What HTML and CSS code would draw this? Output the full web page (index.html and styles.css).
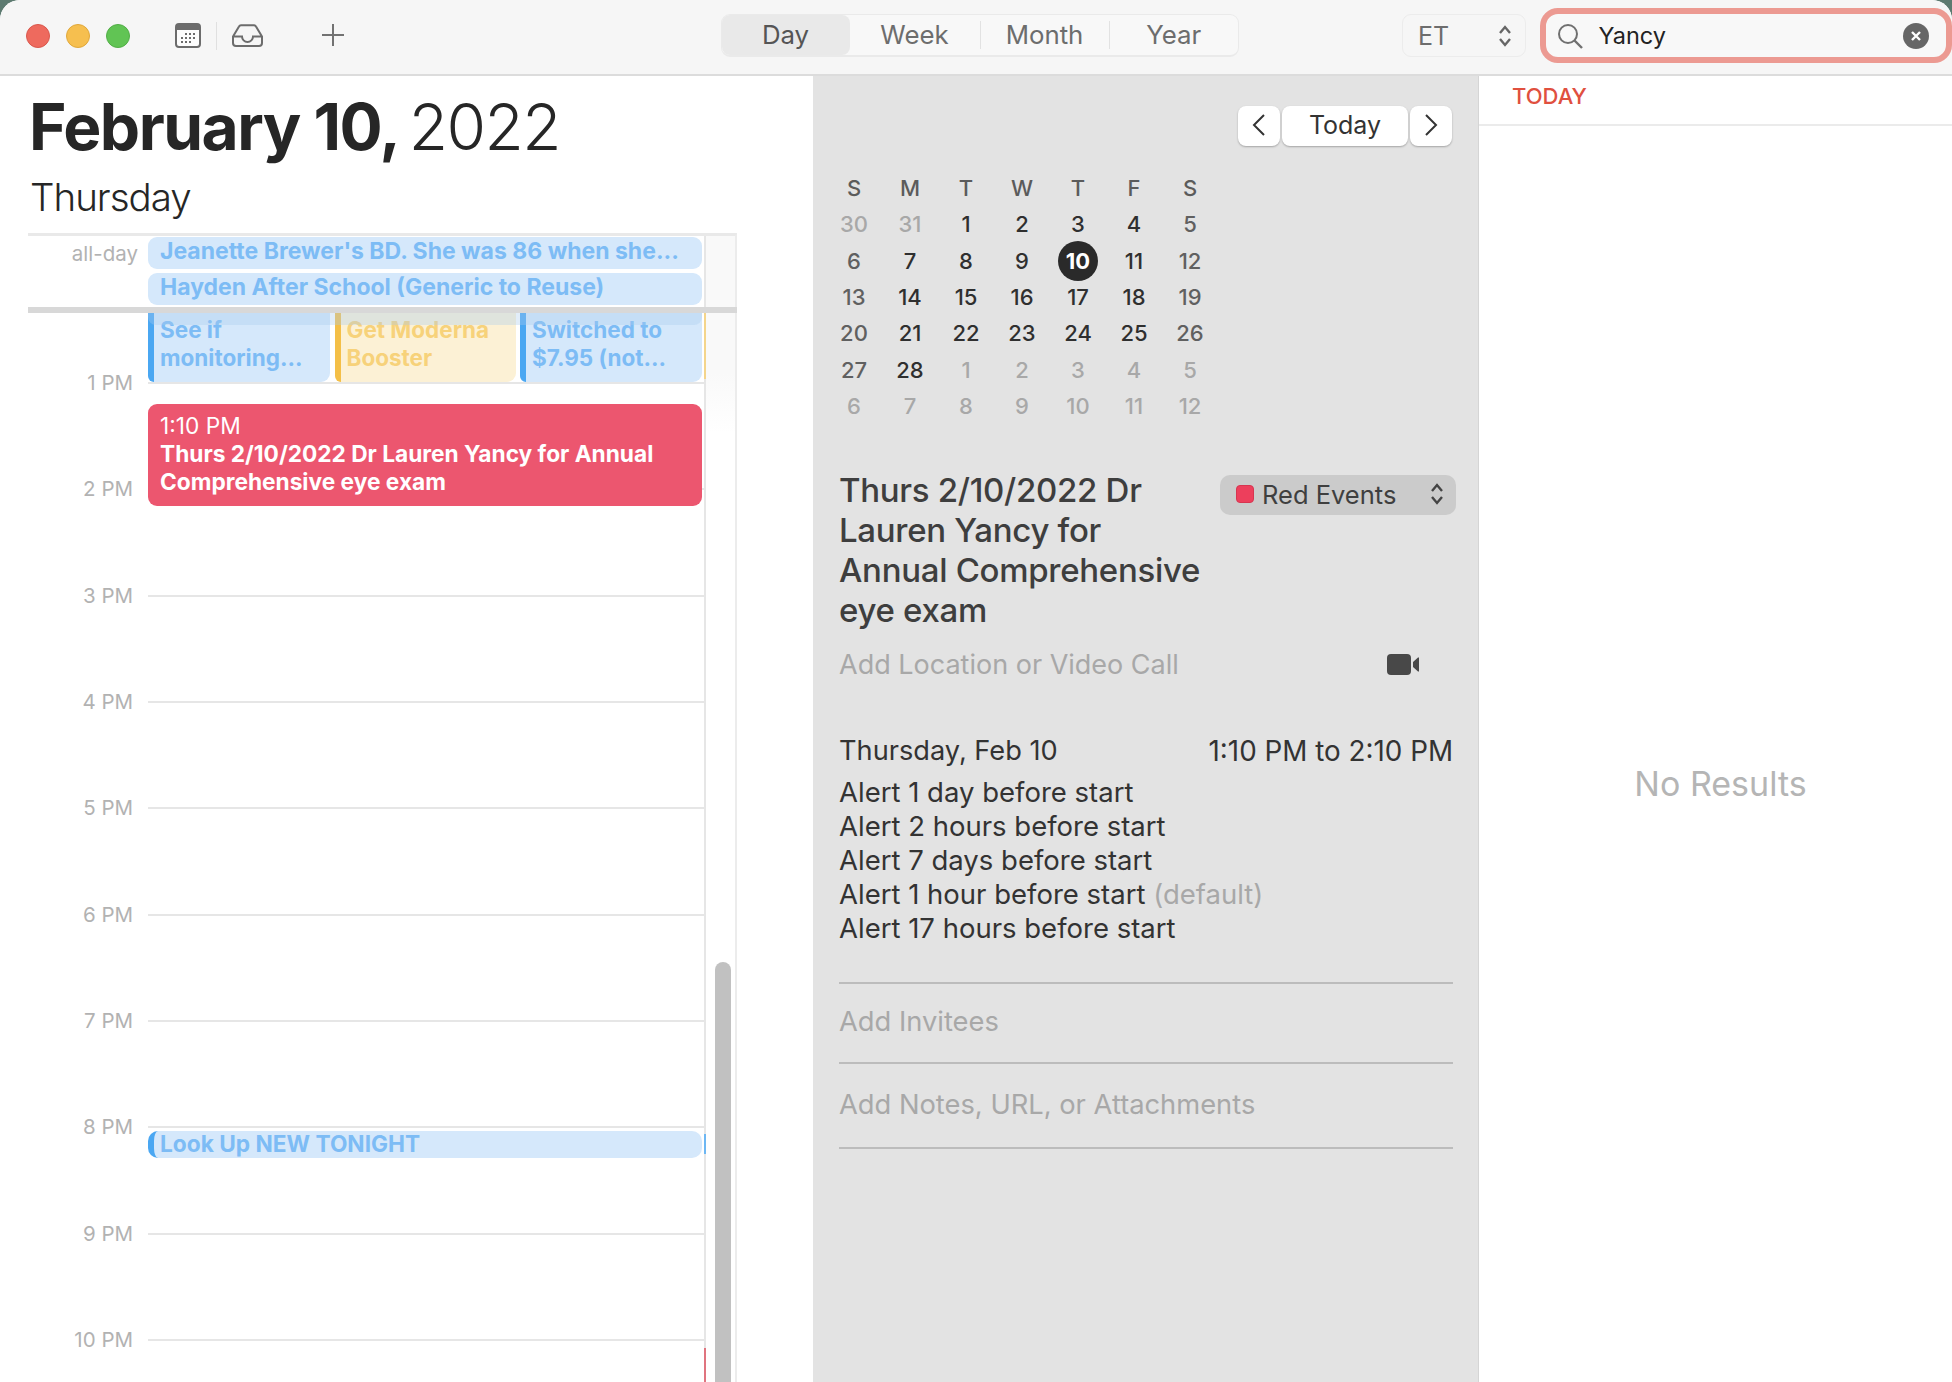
FILE: index.html
```html
<!DOCTYPE html>
<html lang="en">
<head>
<meta charset="utf-8">
<title>Calendar</title>
<link rel="stylesheet" href="styles.css">
</head>
<body>
<div class="window">
  <header class="toolbar">
    <div class="lights">
      <span class="light red"></span><span class="light yellow"></span><span class="light green"></span>
    </div>
    <svg class="tool-cal" width="26" height="25" viewBox="0 0 26 25"><rect x="1" y="1" width="24" height="23" rx="3" fill="#fdfdfd" stroke="#6c6c6c" stroke-width="2"/><path d="M1 7V4a3 3 0 0 1 3-3h18a3 3 0 0 1 3 3v3z" fill="#6c6c6c"/><g fill="#6c6c6c"><rect x="10" y="10" width="2" height="2"/><rect x="14" y="10" width="2" height="2"/><rect x="18" y="10" width="2" height="2"/><rect x="6" y="14" width="2" height="2"/><rect x="10" y="14" width="2" height="2"/><rect x="14" y="14" width="2" height="2"/><rect x="18" y="14" width="2" height="2"/><rect x="6" y="18" width="2" height="2"/><rect x="10" y="18" width="2" height="2"/><rect x="14" y="18" width="2" height="2"/></g></svg>
    <span class="tool-sep"></span>
    <svg class="tool-inbox" width="31" height="23" viewBox="0 0 31 23"><path d="M1 12.5 7 2.5a2.5 2.5 0 0 1 2-1.300h13a2.500 2.500 0 0 1 2 1.300l6 10v6.500a3 3 0 0 1-3 3H4a3 3 0 0 1-3-3z M1 12.500h9a5.500 5.500 0 0 0 11 0h9" fill="none" stroke="#6c6c6c" stroke-width="2"/></svg>
    <svg class="tool-plus" width="22" height="22" viewBox="0 0 22 22"><path d="M11 0v22M0 11h22" stroke="#727272" stroke-width="2"/></svg>
    <nav class="segments">
      <span class="seg seg-on">Day</span>
      <span class="seg">Week</span>
      <span class="seg seg-line">Month</span>
      <span class="seg">Year</span>
    </nav>
    <div class="tz">
      <span>ET</span>
      <svg class="updown" width="14" height="22" viewBox="0 0 14 22"><path d="M2 8l5-6 5 6M2 14l5 6 5-6" fill="none" stroke="#666" stroke-width="2.400"/></svg>
    </div>
    <div class="search">
      <svg width="26" height="26" viewBox="0 0 26 26"><circle cx="11" cy="11" r="9" fill="none" stroke="#707070" stroke-width="2"/><path d="M17.500 17.500 25 25" stroke="#707070" stroke-width="2.400"/></svg>
      <span class="search-text">Yancy</span>
      <svg class="search-clear" width="26" height="26" viewBox="0 0 26 26"><circle cx="13" cy="13" r="13" fill="#666"/><path d="M9 9l8 8M17 9l-8 8" stroke="#fff" stroke-width="2.400"/></svg>
    </div>
  </header>

  <div class="main">
    <section class="day">
      <h1 class="date"><strong>February 10,</strong> <span>2022</span></h1>
      <h2 class="weekday">Thursday</h2>
      <div class="frame">
        <div class="allday">
          <span class="allday-label">all-day</span>
          <div class="allday-events">
            <div class="pill">Jeanette Brewer's BD. She was 86 when she...</div>
            <div class="pill">Hayden After School (Generic to Reuse)</div>
          </div>
        </div>
        <div class="divider"></div>
        <div class="timeline">
          <div class="hours">
            <div class="hour-head"></div>
            <div class="hour"><span class="hour-label">1 PM</span><i class="hour-line"></i></div>
            <div class="hour"><span class="hour-label">2 PM</span><i class="hour-line"></i></div>
            <div class="hour"><span class="hour-label">3 PM</span><i class="hour-line"></i></div>
            <div class="hour"><span class="hour-label">4 PM</span><i class="hour-line"></i></div>
            <div class="hour"><span class="hour-label">5 PM</span><i class="hour-line"></i></div>
            <div class="hour"><span class="hour-label">6 PM</span><i class="hour-line"></i></div>
            <div class="hour"><span class="hour-label">7 PM</span><i class="hour-line"></i></div>
            <div class="hour"><span class="hour-label">8 PM</span><i class="hour-line"></i></div>
            <div class="hour"><span class="hour-label">9 PM</span><i class="hour-line"></i></div>
            <div class="hour"><span class="hour-label">10 PM</span><i class="hour-line"></i></div>

            <div class="morning">
              <div class="ev ev-blue">See if monitoring...</div>
              <div class="ev ev-yellow">Get Moderna Booster</div>
              <div class="ev ev-blue">Switched to $7.95 (not...</div>
            </div>
            <div class="band"></div>
            <span class="sliver-yellow"></span>
            <div class="red-event">
              <div class="red-time">1:10 PM</div>
              <div class="red-title">Thurs 2/10/2022 Dr Lauren Yancy for Annual Comprehensive eye exam</div>
            </div>
            <div class="lookup">Look Up NEW TONIGHT</div>
            <span class="sliver-blue"></span>
            <span class="sliver-red"></span>
          </div>
          <div class="gutter"><div class="thumb"></div></div>
        </div>
      </div>
    </section>

    <section class="mid">
      <div class="nav">
        <button class="nav-btn nav-arrow"><svg width="14" height="24" viewBox="0 0 14 24"><path d="M12 2 2 12l10 10" fill="none" stroke="#333" stroke-width="2"/></svg></button>
        <button class="nav-btn nav-today">Today</button>
        <button class="nav-btn nav-arrow"><svg width="14" height="24" viewBox="0 0 14 24"><path d="M2 2l10 10L2 22" fill="none" stroke="#333" stroke-width="2"/></svg></button>
      </div>
      <div class="mini">
        <span class="dow">S</span><span class="dow">M</span><span class="dow">T</span><span class="dow">W</span><span class="dow">T</span><span class="dow">F</span><span class="dow">S</span>
        <span class="off">30</span><span class="off">31</span><span>1</span><span>2</span><span>3</span><span>4</span><span class="wkend">5</span>
        <span class="wkend">6</span><span>7</span><span>8</span><span>9</span><span class="today">10</span><span>11</span><span class="wkend">12</span>
        <span class="wkend">13</span><span>14</span><span>15</span><span>16</span><span>17</span><span>18</span><span class="wkend">19</span>
        <span class="wkend">20</span><span>21</span><span>22</span><span>23</span><span>24</span><span>25</span><span class="wkend">26</span>
        <span class="wkend">27</span><span>28</span><span class="off">1</span><span class="off">2</span><span class="off">3</span><span class="off">4</span><span class="off">5</span>
        <span class="off">6</span><span class="off">7</span><span class="off">8</span><span class="off">9</span><span class="off">10</span><span class="off">11</span><span class="off">12</span>
      </div>
      <div class="detail-head">
        <h3 class="detail-title">Thurs 2/10/2022 Dr Lauren Yancy for Annual Comprehensive eye exam</h3>
        <div class="picker">
          <i class="picker-dot"></i><span class="picker-name">Red Events</span>
          <svg class="updown" width="14" height="22" viewBox="0 0 14 22"><path d="M2 8l5-6 5 6M2 14l5 6 5-6" fill="none" stroke="#444" stroke-width="2.400"/></svg>
        </div>
      </div>
      <div class="location">
        <span>Add Location or Video Call</span>
        <svg width="32" height="21" viewBox="0 0 32 21"><rect width="24" height="21" rx="4" fill="#484848"/><path d="M26 8l5-4.500a.6.6 0 0 1 1 .4v13.200a.6.6 0 0 1-1 .4l-5-4.500z" fill="#484848"/></svg>
      </div>
      <div class="when"><span>Thursday, Feb 10</span><span class="when-time">1:10 PM to 2:10 PM</span></div>
      <ul class="alerts">
        <li>Alert 1 day before start</li>
        <li>Alert 2 hours before start</li>
        <li>Alert 7 days before start</li>
        <li>Alert 1 hour before start <span class="muted">(default)</span></li>
        <li>Alert 17 hours before start</li>
      </ul>
      <div class="field field-inv">Add Invitees</div>
      <div class="field field-notes">Add Notes, URL, or Attachments</div>
    </section>

    <aside class="results">
      <div class="results-head">TODAY</div>
      <div class="no-results">No Results</div>
    </aside>
  </div>
</div>
</body>
</html>
```
FILE: styles.css
```css
* { box-sizing: border-box; }
html, body { margin: 0; padding: 0; height: 100%; }
body { background: #5d7a70; font-family: Inter, "Liberation Sans", sans-serif; color: #2a2a2a; overflow: hidden; }
.window { width: 1952px; height: 1382px; display: flex; flex-direction: column; background: #fff; border-radius: 20px 20px 0 0; overflow: hidden; }

.toolbar { flex: none; height: 76px; background: #f6f6f6; border-bottom: 2px solid #dcdcdc; display: flex; align-items: center; padding-left: 26px; padding-bottom: 3px; }
.lights { display: flex; gap: 16px; }
.light { width: 24px; height: 24px; border-radius: 50%; }
.red { background: #ee6a5e; border: 1px solid #d9584d; }
.yellow { background: #f6bf4f; border: 1px solid #e0a83b; }
.green { background: #61c454; border: 1px solid #52ae47; }
.tool-cal { margin-left: 45px; }
.tool-sep { width: 1px; height: 28px; background: #e0e0e0; margin-left: 15px; }
.tool-inbox { margin-left: 15px; }
.tool-plus { margin-left: 59px; margin-top: -2px; }

.segments { margin-left: 376.500px; width: 518.500px; height: 43px; display: grid; grid-template-columns: 128px 130px 130px 1fr; align-items: center; border: 1px solid #eaeaea; border-bottom-width: 2px; border-radius: 9px; font-size: 25.800px; color: #6d6d6d; background: #f8f8f8; }
.seg { text-align: center; line-height: 40px; height: 40px; }
.seg-on { background: #e9e9e9; border-radius: 8px; color: #555; }
.seg-line { border-left: 1px solid #e2e2e2; border-right: 1px solid #e2e2e2; line-height: 28px; height: 28px; }

.tz { margin-left: 163px; width: 124px; height: 43px; display: flex; align-items: center; justify-content: space-between; padding: 0 13px 0 15px; border: 1px solid #ececec; border-radius: 9px; font-size: 25px; color: #6d6d6d; }
.search { margin-left: 13.500px; width: 412px; height: 55px; border: 6px solid #ec9a92; border-radius: 18px; display: flex; align-items: center; padding: 0 16.500px 0 11px; background: #f8f8f8; }
.search-text { margin-left: 16px; font-size: 23.500px; color: #222; }
.search-clear { margin-left: auto; }

.main { flex: 1; display: flex; min-height: 0; }

.day { flex: none; width: 813px; padding: 9px 0 0 28px; overflow: hidden; }
.date { margin: 0 0 0 1px; font-size: 64px; line-height: 84px; font-weight: 400; letter-spacing: -1.500px; white-space: nowrap; color: #262626; }
.date strong { font-weight: 700; }
.date span { font-weight: 300; margin-left: -7px; }
.weekday { margin: 3px 0 0 2px; font-size: 38.500px; line-height: 50px; font-weight: 300; letter-spacing: -1px; color: #262626; }
.frame { width: 709px; margin-top: 11px; border-top: 3px solid #e9e9e9; border-right: 2px solid #ececec; }

.allday { height: 71px; display: flex; background: linear-gradient(to right, #fff 676px, #e6e6e6 676px, #e6e6e6 678px, #f9f9f9 678px); }
.allday-label { width: 110px; padding-top: 5px; text-align: right; font-size: 20.500px; line-height: 26px; color: #b2b2b2; }
.allday-events { margin: 1px 0 0 10px; width: 554px; display: flex; flex-direction: column; gap: 4px; }
.pill { height: 32px; line-height: 29px; padding-left: 12px; background: #d5e8fb; border-radius: 9px; color: #7dbcf5; font-size: 23px; font-weight: 700; white-space: nowrap; }
.divider { height: 6px; background: #d8d8d8; margin-right: -2px; }

.timeline { display: flex; height: 1100px; }
.hours { position: relative; width: 678px; flex: none; border-right: 2px solid #e6e6e6; }
.hour-head { height: 69px; }
.hour { height: 106.330px; display: flex; }
.hour-label { width: 105px; margin-top: -12px; height: 26px; text-align: right; font-size: 20.500px; line-height: 26px; color: #b2b2b2; }
.hour-line { display: block; margin-left: 15px; flex: 1; height: 2px; background: #e6e6e6; }
.gutter { flex: 1; position: relative; background: linear-gradient(#f9f9f9, #f9f9f9 60px, #fff 120px); }
.thumb { position: absolute; left: 9px; width: 16px; top: 649px; bottom: -20px; background: #c1c1c1; border-radius: 8px 8px 0 0; }

.morning { position: absolute; left: 120px; top: 0; width: 554px; height: 69px; display: grid; grid-template-columns: 182px 181px 182px; column-gap: 4.500px; }
.ev { padding: 3px 6px 0 6px; font-size: 22.500px; font-weight: 700; line-height: 28px; border-left: 6px solid; border-radius: 0 0 9px 6px; overflow: hidden; }
.ev-blue { background: #d5e8fb; border-color: #4aa7f2; color: #7dbcf5; }
.ev-yellow { background: #fcf1d5; border-color: #f4bf47; color: #f7d27a; }
.band { position: absolute; left: 120px; top: 0; width: 554px; height: 12px; background: rgba(168, 203, 238, .35); border-radius: 0 0 8px 8px; }
.sliver-yellow { position: absolute; right: -2px; top: 0; width: 2px; height: 66px; background: #f4d58b; }
.red-event { position: absolute; left: 120px; top: 91px; width: 554px; height: 102px; background: #ec566f; border-radius: 9px; padding: 8px 10px 0 12px; color: #fff; font-size: 22.700px; line-height: 28px; }
.red-time { font-weight: 400; }
.red-title { font-weight: 700; }
.lookup { position: absolute; left: 120px; top: 818px; width: 554px; height: 27px; background: #d5e8fb; border-left: 6px solid #4aa7f2; border-radius: 10px; padding-left: 6px; color: #7dbcf5; font-size: 22.700px; font-weight: 700; line-height: 26px; }
.sliver-blue { position: absolute; right: -2px; top: 821px; width: 2px; height: 20px; background: #6db7f3; }
.sliver-red { position: absolute; right: -2px; top: 1035px; width: 2px; height: 40px; background: #e0747f; }

.mid { flex: none; width: 666px; background: #e3e3e3; border-right: 1px solid #d5d5d5; padding: 30px 25px 0 26px; position: relative; }
.nav { display: flex; justify-content: flex-end; gap: 2px; margin-right: 1px; }
.nav-btn { height: 40px; border: 0; padding: 0 0 2px; background: #fff; border-radius: 8px; box-shadow: 0 1px 2px rgba(0,0,0,.28); font: 400 25px Inter, "Liberation Sans", sans-serif; color: #333; display: flex; align-items: center; justify-content: center; }
.nav-arrow { width: 42px; }
.nav-today { width: 126px; }

.mini { margin: 24px 0 0 -13px; width: 392px; display: grid; grid-template-columns: repeat(7, 56px); grid-auto-rows: 36.300px; font-size: 22px; font-weight: 500; color: #2f2f2f; }
.mini span { display: flex; align-items: center; justify-content: center; }
.mini .dow { color: #5b5b5b; }
.mini .off { color: #a8a8a8; }
.mini .wkend { color: #606060; }
.mini .today { width: 40px; height: 40px; margin: -2px auto; border-radius: 50%; background: #2a2a2a; color: #fff; font-weight: 700; }

.detail-head { margin-top: 46px; display: flex; justify-content: space-between; align-items: flex-start; }
.detail-title { margin: 0; width: 365px; font-size: 33px; line-height: 40px; font-weight: 500; letter-spacing: -.3px; color: #3e3e3e; }
.picker { margin-top: 5px; margin-right: -3px; width: 236px; height: 40px; border-radius: 10px; background: #cbcbcb; display: flex; align-items: center; padding: 0 12px 2px 16px; font-size: 25.500px; color: #3f3f3f; }
.picker-dot { width: 18px; height: 18px; border-radius: 4px; background: #ed3f5c; border: 1px solid #d73550; }
.picker-name { margin-left: 8px; }
.picker .updown { margin-left: auto; }

.location { margin-top: 14px; display: flex; justify-content: space-between; align-items: center; height: 40px; font-size: 27px; color: #a8a8a8; padding-right: 34px; }
.when { margin-top: 50px; display: flex; justify-content: space-between; font-size: 27.200px; line-height: 34px; color: #333; }
.when-time { font-size: 27.800px; }
.alerts { list-style: none; margin: 7px 0 0; padding: 0; font-size: 27.500px; line-height: 34px; color: #333; }
.muted { color: #a8a8a8; }
.field { border-top: 2px solid #bcbcbc; font-size: 27.300px; color: #a8a8a8; }
.field-inv { margin-top: 37px; height: 80px; line-height: 76px; }
.field-notes { height: 87px; border-bottom: 2px solid #bcbcbc; line-height: 82px; }

.results { flex: 1; display: flex; flex-direction: column; }
.results-head { flex: none; height: 50px; padding: 8px 0 0 33px; font-size: 22px; line-height: 24px; font-weight: 500; color: #e0503f; border-bottom: 2px solid #ebebeb; }
.no-results { margin-top: 637px; padding-left: 10px; text-align: center; font-size: 34px; line-height: 42px; color: #b5b5b5; }
```
